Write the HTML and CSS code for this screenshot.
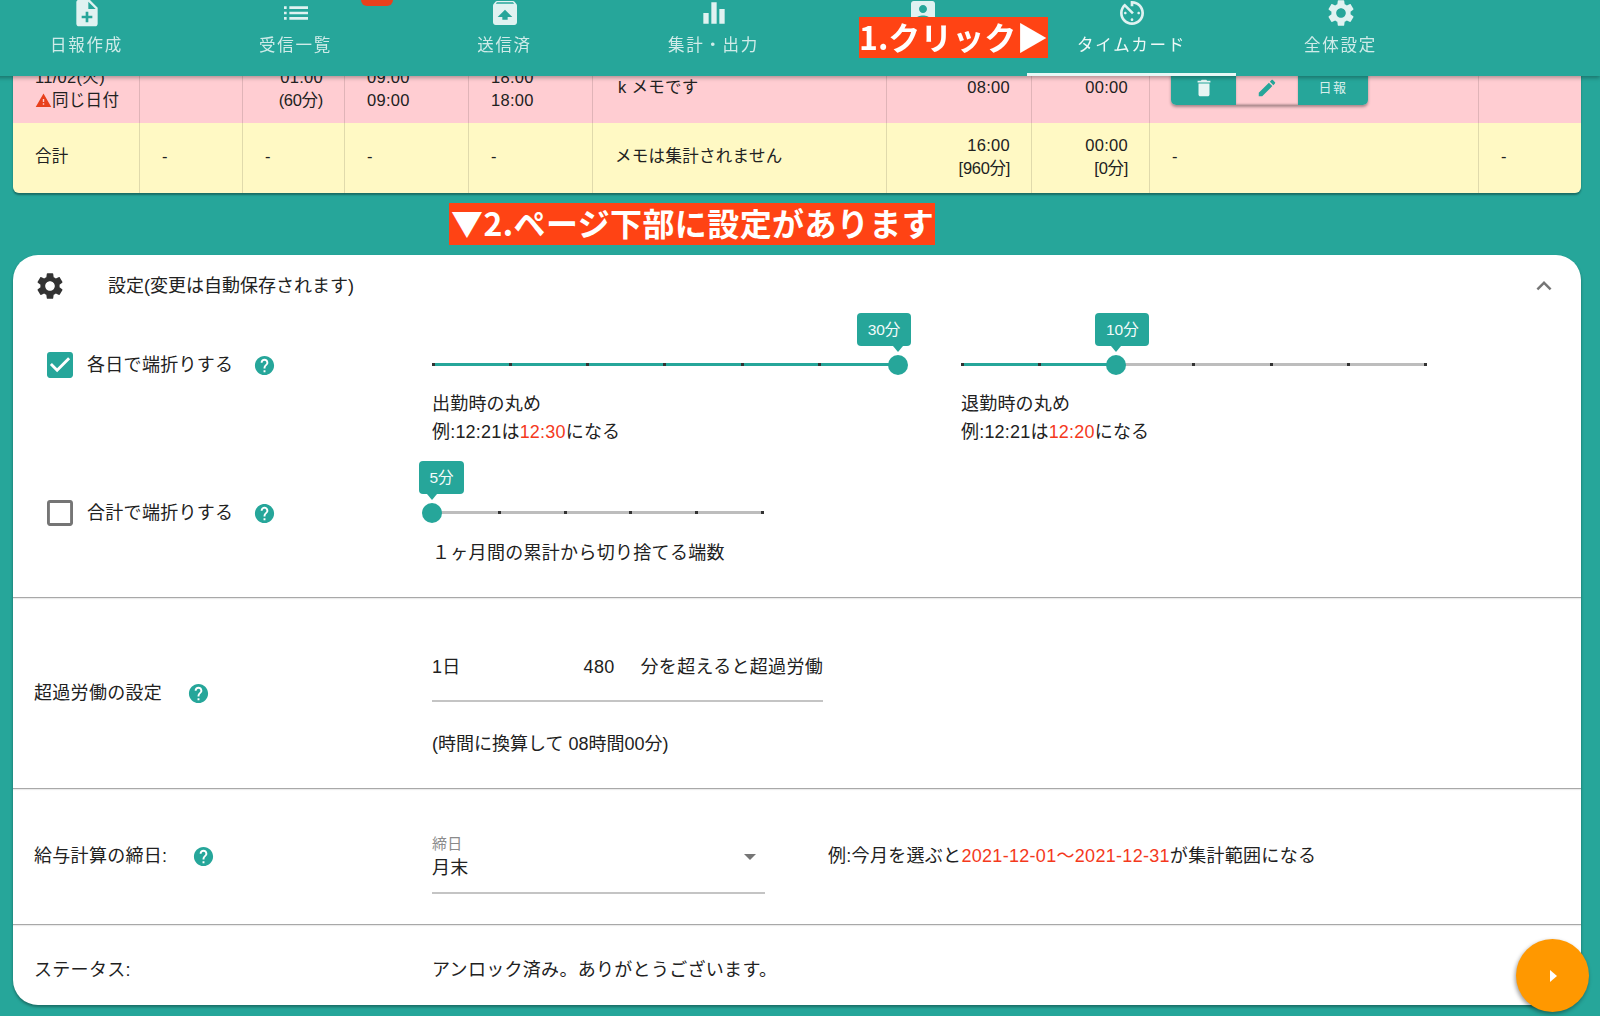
FILE: index.html
```html
<!DOCTYPE html>
<html lang="ja">
<head>
  <meta charset="UTF-8" />
  <title>タイムカード</title>
  <link rel="stylesheet" href="styles.css">
</head>
<body>

  <nav class="nav">
    <div class="nav-tab">
      <svg class="nav-icon" viewBox="0 0 24 24"><path d="M14 2H6c-1.1 0-1.99.9-1.99 2L4 20c0 1.1.89 2 1.99 2H18c1.1 0 2-.9 2-2V8l-6-6zm2 14h-3v3h-2v-3H8v-2h3v-3h2v3h3v2zm-3-7V3.5L18.5 9H13z"/></svg>
      <span>日報作成</span>
    </div>
    <div class="nav-tab">
      <svg class="nav-icon" viewBox="0 0 24 24"><path d="M3 13h2v-2H3v2zm0 4h2v-2H3v2zm0-8h2V7H3v2zm4 4h14v-2H7v2zm0 4h14v-2H7v2zM7 7v2h14V7H7z"/></svg>
      <span>受信一覧</span>
      <i class="nav-badge"></i>
    </div>
    <div class="nav-tab">
      <svg class="nav-icon" viewBox="0 0 24 24"><path d="M20.55 5.22l-1.39-1.68C18.88 3.21 18.47 3 18 3H6c-.47 0-.88.21-1.15.55L3.46 5.22C3.17 5.57 3 6.01 3 6.5V19c0 1.1.89 2 2 2h14c1.1 0 2-.9 2-2V6.5c0-.49-.17-.93-.45-1.28zM12 9.5l5.5 5.5H14v2h-4v-2H6.5L12 9.5zM5.12 5l.82-1h12l.93 1H5.12z"/></svg>
      <span>送信済</span>
    </div>
    <div class="nav-tab">
      <svg class="nav-icon" viewBox="0 0 24 24"><path d="M10 20h4V4h-4v16zm-6 0h4v-8H4v8zM16 9v11h4V9h-4z"/></svg>
      <span>集計・出力</span>
    </div>
    <div class="nav-tab">
      <svg class="nav-icon" viewBox="0 0 24 24"><path d="M3 5v14c0 1.1.89 2 2 2h14c1.1 0 2-.9 2-2V5c0-1.1-.9-2-2-2H5c-1.11 0-2 .9-2 2zm12 4c0 1.66-1.34 3-3 3s-3-1.34-3-3 1.34-3 3-3 3 1.34 3 3zm-9 8c0-2 4-3.1 6-3.1s6 1.1 6 3.1v1H6v-1z"/></svg>
    </div>
    <div class="nav-tab active">
      <svg class="nav-icon" viewBox="0 0 24 24"><path d="M11 17c0 .55.45 1 1 1s1-.45 1-1-.45-1-1-1-1 .45-1 1zm0-14v4h2V5.08c3.39.49 6 3.39 6 6.92 0 3.87-3.13 7-7 7s-7-3.13-7-7c0-1.68.59-3.22 1.58-4.42L12 13l1.41-1.41-6.8-6.8v.02C4.42 6.45 3 9.05 3 12c0 4.97 4.02 9 8.99 9S21 16.97 21 12s-4.03-9-9.01-9H11zm7 9c0-.55-.45-1-1-1s-1 .45-1 1 .45 1 1 1 1-.45 1-1zM6 12c0 .55.45 1 1 1s1-.45 1-1-.45-1-1-1-1 .45-1 1z"/></svg>
      <span>タイムカード</span>
    </div>
    <div class="nav-tab">
      <svg class="nav-icon" viewBox="0 0 24 24"><path d="M19.14 12.94c.04-.3.06-.61.06-.94 0-.32-.02-.64-.07-.94l2.03-1.58c.18-.14.23-.41.12-.61l-1.92-3.32c-.12-.22-.37-.29-.59-.22l-2.39.96c-.5-.38-1.03-.7-1.62-.94l-.36-2.54c-.04-.24-.24-.41-.48-.41h-3.84c-.24 0-.43.17-.47.41l-.36 2.54c-.59.24-1.13.57-1.62.94l-2.39-.96c-.22-.08-.47 0-.59.22L2.74 8.87c-.12.21-.08.47.12.61l2.03 1.58c-.05.3-.09.63-.09.94s.02.64.07.94l-2.03 1.58c-.18.14-.23.41-.12.61l1.92 3.32c.12.22.37.29.59.22l2.39-.96c.5.38 1.03.7 1.62.94l.36 2.54c.05.24.24.41.48.41h3.84c.24 0 .44-.17.47-.41l.36-2.54c.59-.24 1.13-.56 1.62-.94l2.39.96c.22.08.47 0 .59-.22l1.92-3.32c.12-.22.07-.47-.12-.61l-2.01-1.58zM12 15.6c-1.98 0-3.6-1.62-3.6-3.6s1.62-3.6 3.6-3.6 3.6 1.62 3.6 3.6-1.62 3.6-3.6 3.6z"/></svg>
      <span>全体設定</span>
    </div>
  </nav>

  <div class="callout callout-click">1.クリック▶</div>

  <main class="content">
    <table class="report">
      <colgroup>
        <col class="col-date"><col class="col-type"><col class="col-break"><col class="col-in"><col class="col-out">
        <col class="col-memo"><col class="col-work"><col class="col-over"><col class="col-action"><col class="col-last">
      </colgroup>
      <tr class="row-warn">
        <td class="date">11/02(火)<br><svg class="warn-icon" viewBox="0 0 24 24"><path d="M1 21h22L12 2 1 21zm12-3h-2v-2h2v2zm0-4h-2v-4h2v4z"/></svg>同じ日付</td>
        <td></td>
        <td class="num">01:00<br><span class="tight">(60分)</span></td>
        <td>09:00<br>09:00</td>
        <td>18:00<br>18:00</td>
        <td class="memo">k メモです</td>
        <td class="num single">08:00</td>
        <td class="num single">00:00</td>
        <td class="actions">
          <div class="btn-group">
            <span class="btn"><svg viewBox="0 0 24 24"><path d="M6 19c0 1.1.9 2 2 2h8c1.1 0 2-.9 2-2V7H6v12zM19 4h-3.5l-1-1h-5l-1 1H5v2h14V4z"/></svg></span>
            <span class="btn btn-edit"><svg viewBox="0 0 24 24"><path d="M3 17.25V21h3.75L17.81 9.94l-3.75-3.75L3 17.25zM20.71 7.04c.39-.39.39-1.02 0-1.41l-2.34-2.34c-.39-.39-1.02-.39-1.41 0l-1.83 1.83 3.75 3.75 1.83-1.83z"/></svg></span>
            <span class="btn btn-report">日報</span>
          </div>
        </td>
        <td></td>
      </tr>
      <tr class="row-total">
        <td>合計</td>
        <td>-</td>
        <td>-</td>
        <td>-</td>
        <td>-</td>
        <td>メモは集計されません</td>
        <td class="num">16:00<br><span class="tight">[960分]</span></td>
        <td class="num">00:00<br><span class="tight">[0分]</span></td>
        <td>-</td>
        <td>-</td>
      </tr>
    </table>

    <div class="callout callout-below">▼2.ページ下部に設定があります</div>

    <section class="card">
      <header class="card-head">
        <svg class="card-gear" viewBox="0 0 24 24"><path d="M19.14 12.94c.04-.3.06-.61.06-.94 0-.32-.02-.64-.07-.94l2.03-1.58c.18-.14.23-.41.12-.61l-1.92-3.32c-.12-.22-.37-.29-.59-.22l-2.39.96c-.5-.38-1.03-.7-1.62-.94l-.36-2.54c-.04-.24-.24-.41-.48-.41h-3.84c-.24 0-.43.17-.47.41l-.36 2.54c-.59.24-1.13.57-1.62.94l-2.39-.96c-.22-.08-.47 0-.59.22L2.74 8.87c-.12.21-.08.47.12.61l2.03 1.58c-.05.3-.09.63-.09.94s.02.64.07.94l-2.03 1.58c-.18.14-.23.41-.12.61l1.92 3.32c.12.22.37.29.59.22l2.39-.96c.5.38 1.03.7 1.62.94l.36 2.54c.05.24.24.41.48.41h3.84c.24 0 .44-.17.47-.41l.36-2.54c.59-.24 1.13-.56 1.62-.94l2.39.96c.22.08.47 0 .59-.22l1.92-3.32c.12-.22.07-.47-.12-.61l-2.01-1.58zM12 15.6c-1.98 0-3.6-1.62-3.6-3.6s1.62-3.6 3.6-3.6 3.6 1.62 3.6 3.6-1.62 3.6-3.6 3.6z"/></svg>
        <span class="card-title">設定(変更は自動保存されます)</span>
        <svg class="card-chevron" viewBox="0 0 24 24"><path d="M12 8l-6 6 1.41 1.41L12 10.83l4.59 4.58L18 14z"/></svg>
      </header>

      <div class="section section-round">
        <div class="round-row">
          <div class="round-label">
            <svg class="check" viewBox="3 3 18 18"><path d="M19 3H5c-1.11 0-2 .9-2 2v14c0 1.1.89 2 2 2h14c1.11 0 2-.9 2-2V5c0-1.1-.89-2-2-2zm-9 14l-5-5 1.41-1.41L10 14.17l7.59-7.59L19 8l-9 9z"/></svg>
            <span class="label-text">各日で端折りする</span>
            <svg class="help help-round" viewBox="0 0 24 24"><path d="M12 2C6.48 2 2 6.48 2 12s4.48 10 10 10 10-4.48 10-10S17.52 2 12 2zm1 17h-2v-2h2v2zm2.07-7.75l-.9.92C13.45 12.9 13 13.5 13 15h-2v-.5c0-1.1.45-2.1 1.17-2.83l1.24-1.26c.37-.36.59-.86.59-1.41 0-1.1-.9-2-2-2s-2 .9-2 2H8c0-2.21 1.79-4 4-4s4 1.79 4 4c0 .88-.36 1.68-.93 2.25z"/></svg>
          </div>
          <div class="round-item">
            <div class="slider">
              <div class="slider-fill" style="width: 100%"></div>
              <div class="slider-ticks"><i></i><i></i><i></i><i></i><i></i><i></i><i></i></div>
              <div class="slider-thumb" style="left: 100%"><span class="tip tip-30">30分</span></div>
            </div>
            <p class="note">出勤時の丸め<br>例:12:21は<em>12:30</em>になる</p>
          </div>
          <div class="round-item">
            <div class="slider">
              <div class="slider-fill" style="width: 33.33%"></div>
              <div class="slider-ticks"><i></i><i></i><i></i><i></i><i></i><i></i><i></i></div>
              <div class="slider-thumb" style="left: 33.33%"><span class="tip tip-10">10分</span></div>
            </div>
            <p class="note">退勤時の丸め<br>例:12:21は<em>12:20</em>になる</p>
          </div>
        </div>
        <div class="round-row round-row-total">
          <div class="round-label">
            <svg class="check check-off" viewBox="3 3 18 18"><path d="M19 5v14H5V5h14m0-2H5c-1.1 0-2 .9-2 2v14c0 1.1.9 2 2 2h14c1.1 0 2-.9 2-2V5c0-1.1-.9-2-2-2z"/></svg>
            <span class="label-text">合計で端折りする</span>
            <svg class="help help-round" viewBox="0 0 24 24"><path d="M12 2C6.48 2 2 6.48 2 12s4.48 10 10 10 10-4.48 10-10S17.52 2 12 2zm1 17h-2v-2h2v2zm2.07-7.75l-.9.92C13.45 12.9 13 13.5 13 15h-2v-.5c0-1.1.45-2.1 1.17-2.83l1.24-1.26c.37-.36.59-.86.59-1.41 0-1.1-.9-2-2-2s-2 .9-2 2H8c0-2.21 1.79-4 4-4s4 1.79 4 4c0 .88-.36 1.68-.93 2.25z"/></svg>
          </div>
          <div class="round-item round-item-short">
            <div class="slider">
              <div class="slider-ticks"><i></i><i></i><i></i><i></i><i></i><i></i></div>
              <div class="slider-thumb" style="left: 0"><span class="tip tip-5">5分</span></div>
            </div>
            <p class="note note-total">１ヶ月間の累計から切り捨てる端数</p>
          </div>
        </div>
      </div>

      <div class="section section-over">
        <div class="field-label">
          <span class="label-text">超過労働の設定</span>
          <svg class="help" viewBox="0 0 24 24"><path d="M12 2C6.48 2 2 6.48 2 12s4.48 10 10 10 10-4.48 10-10S17.52 2 12 2zm1 17h-2v-2h2v2zm2.07-7.75l-.9.92C13.45 12.9 13 13.5 13 15h-2v-.5c0-1.1.45-2.1 1.17-2.83l1.24-1.26c.37-.36.59-.86.59-1.41 0-1.1-.9-2-2-2s-2 .9-2 2H8c0-2.21 1.79-4 4-4s4 1.79 4 4c0 .88-.36 1.68-.93 2.25z"/></svg>
        </div>
        <div class="over-body">
          <div class="over-input"><span>1日</span><span class="over-value">480</span><span>分を超えると超過労働</span></div>
          <p class="over-hint">(時間に換算して 08時間00分)</p>
        </div>
      </div>

      <div class="section section-close">
        <div class="field-label">
          <span class="label-text">給与計算の締日:</span>
          <svg class="help" viewBox="0 0 24 24"><path d="M12 2C6.48 2 2 6.48 2 12s4.48 10 10 10 10-4.48 10-10S17.52 2 12 2zm1 17h-2v-2h2v2zm2.07-7.75l-.9.92C13.45 12.9 13 13.5 13 15h-2v-.5c0-1.1.45-2.1 1.17-2.83l1.24-1.26c.37-.36.59-.86.59-1.41 0-1.1-.9-2-2-2s-2 .9-2 2H8c0-2.21 1.79-4 4-4s4 1.79 4 4c0 .88-.36 1.68-.93 2.25z"/></svg>
        </div>
        <div class="select">
          <label>締日</label>
          <div class="select-value">月末</div>
          <i class="select-arrow"></i>
        </div>
        <p class="close-note">例:今月を選ぶと<em>2021-12-01〜2021-12-31</em>が集計範囲になる</p>
      </div>

      <div class="section section-status">
        <div class="field-label">ステータス:</div>
        <div>アンロック済み。ありがとうございます。</div>
      </div>
    </section>
  </main>

  <button class="fab"><i></i></button>

</body>
</html>
```

FILE: styles.css
```css
* {
  box-sizing: border-box;
}

html, body {
  height: 100%;
}

body {
  margin: 0;
  overflow: hidden;
  background-color: #26a69a;
  color: #212121;
  font-family: 'Liberation Sans', 'Noto Sans CJK JP', sans-serif;
  font-size: 18px;
  letter-spacing: 0.3px;
}

em {
  font-style: normal;
  color: #f4391c;
}

p {
  margin: 0;
}

/* top navigation */
.nav {
  position: fixed;
  top: 0;
  left: -18px;
  right: 0;
  z-index: 10;
  height: 76px;
  display: flex;
  background-color: #26a69a;
  box-shadow: 0 2px 4px rgba(0, 0, 0, 0.3);
}

.nav-tab {
  position: relative;
  width: 209px;
  height: 76px;
  display: flex;
  flex-direction: column;
  align-items: center;
  color: rgba(255, 255, 255, 0.78);
  font-size: 16.5px;
  letter-spacing: 1.7px;
  line-height: 20px;
}

.nav-tab.active {
  color: rgba(255, 255, 255, 0.92);
  border-bottom: 3px solid #e8f8f6;
}

.nav-icon {
  width: 32px;
  height: 32px;
  flex: none;
  margin-top: -3px;
  margin-bottom: 6px;
  fill: #e0f2f1;
}

.nav-badge {
  position: absolute;
  top: -6px;
  left: 170px;
  width: 32px;
  height: 12px;
  border-radius: 6px;
  background-color: #e8401c;
}

/* orange-red notes laid over the screenshot */
.callout {
  background-color: #ff4314;
  color: #fff;
  font-family: 'Noto Sans CJK JP', 'Liberation Sans', sans-serif;
  font-weight: bold;
  letter-spacing: 0;
  white-space: nowrap;
}

.callout-click {
  position: fixed;
  top: 17px;
  left: 859px;
  z-index: 11;
  width: 189px;
  height: 41px;
  font-size: 32px;
  line-height: 39px;
}

.callout-below {
  width: 486px;
  height: 42px;
  margin: 10px 0 10px 436px;
  padding-left: 2px;
  font-size: 32px;
  letter-spacing: 0.4px;
  line-height: 38px;
}

.content {
  padding: 53px 18px 0 13px;
}

/* report table */
.report {
  width: 1568px;
  border-collapse: separate;
  border-spacing: 0;
  table-layout: fixed;
  border-radius: 0 0 6px 6px;
  box-shadow: 0 2px 2px rgba(0, 0, 0, 0.35);
  font-size: 16.5px;
  line-height: 23px;
}

.col-date { width: 126px; }
.col-type { width: 103px; }
.col-break { width: 102px; }
.col-in { width: 124px; }
.col-out { width: 124px; }
.col-memo { width: 294px; }
.col-work { width: 145px; }
.col-over { width: 118px; }
.col-action { width: 329px; }
.col-last { width: 103px; }

.report td {
  padding: 0 22px;
  border-left: 1px solid rgba(0, 0, 0, 0.12);
  vertical-align: middle;
}

.report td:first-child {
  border-left: 0;
}

.report td.date {
  padding-right: 0;
  white-space: nowrap;
}

.row-warn td {
  height: 70px;
  background-color: #ffcdd2;
}

.report .row-warn td {
  padding-top: 2px;
}

.row-total td {
  height: 70px;
  background-color: #fff9c4;
}

.report .row-total td {
  padding-bottom: 3px;
}

.row-total td:first-child {
  border-bottom-left-radius: 6px;
}

.row-total td:last-child {
  border-bottom-right-radius: 6px;
}

.report td.num {
  padding-right: 21px;
  text-align: right;
}

.report .row-warn td.single {
  padding-top: 0;
  padding-bottom: 2px;
}

.tight {
  letter-spacing: -0.3px;
}

.report .row-warn td.memo {
  padding: 0 0 2px 25px;
}

.warn-icon {
  width: 17px;
  height: 17px;
  fill: #e8401c;
  vertical-align: -3px;
}

.report .row-warn td.actions {
  padding: 0 0 0 21px;
  vertical-align: top;
}

.btn-group {
  display: flex;
  width: 197px;
  height: 52px;
  border-radius: 0 0 5px 5px;
  box-shadow: 0 2px 3px rgba(0, 0, 0, 0.35);
  overflow: hidden;
}

.btn {
  display: flex;
  align-items: flex-end;
  justify-content: center;
  width: 65px;
  padding-bottom: 6px;
  background-color: #26a69a;
}

.btn svg {
  width: 22px;
  height: 22px;
  fill: #e8f5f3;
}

.btn-edit {
  width: 62px;
  background-color: #ffcdd2;
  box-shadow: inset 0 -1px 2px rgba(0, 0, 0, 0.25);
}

.btn-edit svg {
  fill: #26a69a;
}

.btn-report {
  width: 70px;
  padding-bottom: 8px;
  color: #d6efec;
  font-size: 13px;
  line-height: 18px;
  letter-spacing: 1.4px;
}

/* settings card */
.card {
  width: 1568px;
  height: 750px;
  border-radius: 25px;
  background-color: #fff;
  box-shadow: 0 2px 3px rgba(0, 0, 0, 0.35);
}

.card-head {
  display: flex;
  align-items: center;
  height: 62px;
  padding-left: 21px;
}

.card-gear {
  width: 32px;
  height: 32px;
  fill: #333;
}

.card-title {
  margin-left: 42px;
  padding-bottom: 4px;
  letter-spacing: 0;
}

.card-chevron {
  width: 30px;
  height: 30px;
  margin-left: auto;
  margin-right: 22px;
  fill: #757575;
}

.section {
  display: flex;
  align-items: center;
  padding-left: 21px;
  border-bottom: 1px solid #a8a8a8;
  box-shadow: 0 1px 1px rgba(0, 0, 0, 0.08);
}

.section-round {
  display: block;
  height: 281px;
  padding-top: 38px;
  padding-left: 0;
}

.round-row {
  display: flex;
}

.round-row-total {
  margin-top: 57px;
}

.round-label {
  display: flex;
  align-items: center;
  width: 419px;
  height: 20px;
  padding-left: 34px;
}

.label-text {
  padding-bottom: 5px;
}

.check {
  width: 26px;
  height: 26px;
  margin-right: 14px;
  fill: #26a69a;
}

.check-off {
  fill: #757575;
}

.help {
  width: 23px;
  height: 23px;
  fill: #26a69a;
}

.help-round {
  margin-left: 20px;
}

.round-item {
  width: 466px;
  margin-right: 63px;
}

.round-item-short {
  width: 332px;
}

/* rounding sliders */
.slider {
  position: relative;
  height: 20px;
  display: flex;
  align-items: center;
}

.slider::before {
  content: "";
  position: absolute;
  left: 0;
  right: 0;
  top: 8px;
  height: 3px;
  background-color: #bdbdbd;
}

.slider-fill {
  position: absolute;
  left: 0;
  top: 8px;
  height: 3px;
  background-color: #26a69a;
}

.slider-ticks {
  position: absolute;
  left: 0;
  right: 0;
  top: 8px;
  display: flex;
  justify-content: space-between;
}

.slider-ticks i {
  width: 3px;
  height: 3px;
  background-color: #333;
}

.slider-thumb {
  position: absolute;
  top: 0;
  width: 20px;
  height: 20px;
  margin-left: -10px;
  border-radius: 50%;
  background-color: #26a69a;
}

.tip {
  position: absolute;
  top: -42px;
  height: 33px;
  border-radius: 4px;
  background-color: #26a69a;
  color: #f2fbfa;
  font-size: 15.5px;
  letter-spacing: 0;
  line-height: 33px;
  text-align: center;
  white-space: nowrap;
}

.tip::after {
  content: "";
  position: absolute;
  bottom: -6px;
  border-left: 5px solid transparent;
  border-right: 5px solid transparent;
  border-top: 6px solid #26a69a;
}

.tip-30 {
  left: -31px;
  width: 54px;
}

.tip-30::after {
  left: 36px;
}

.tip-10 {
  left: -11px;
  width: 54px;
}

.tip-10::after {
  left: 16px;
}

.tip-5 {
  left: -3px;
  width: 45px;
}

.tip-5::after {
  left: 8px;
}

.note {
  margin-top: 15px;
  line-height: 28px;
  letter-spacing: 0.2px;
}

.note-total {
  margin-top: 16px;
  letter-spacing: 0.3px;
}

/* plain field rows */
.field-label {
  display: flex;
  align-items: center;
  width: 398px;
  flex: none;
}

.field-label .help {
  margin-left: 25px;
}

.section-over {
  height: 191px;
}

.over-body {
  margin-top: 26px;
}

.over-input {
  display: flex;
  width: 391px;
  height: 49px;
  line-height: 29px;
  border-bottom: 2px solid #c4c4c4;
}

.over-value {
  margin: 0 26px 0 auto;
}

.over-hint {
  margin-top: 28px;
  line-height: 29px;
  letter-spacing: 0;
}

.section-close {
  height: 136px;
}

.select {
  position: relative;
  width: 333px;
  height: 59px;
  margin-top: 15px;
  border-bottom: 2px solid #c4c4c4;
}

.select label {
  display: block;
  color: #8a8a8a;
  font-size: 15px;
  line-height: 18px;
}

.select-value {
  line-height: 30px;
}

.select-arrow {
  position: absolute;
  top: 19px;
  right: 9px;
  border-left: 6px solid transparent;
  border-right: 6px solid transparent;
  border-top: 6px solid #757575;
}

.close-note {
  margin-left: 63px;
  padding-bottom: 5px;
}

.section-status {
  height: 79px;
  padding-top: 6px;
  border-bottom: 0;
  box-shadow: none;
}

/* round button bottom right */
.fab {
  position: fixed;
  top: 939px;
  left: 1516px;
  z-index: 5;
  width: 73px;
  height: 73px;
  padding: 0;
  border: none;
  border-radius: 50%;
  background-color: #ff9800;
  box-shadow: -1px 2px 4px rgba(0, 0, 0, 0.4);
}

.fab i {
  display: block;
  width: 0;
  margin-left: 34px;
  border-top: 6px solid transparent;
  border-bottom: 6px solid transparent;
  border-left: 7px solid #fff;
}
```
